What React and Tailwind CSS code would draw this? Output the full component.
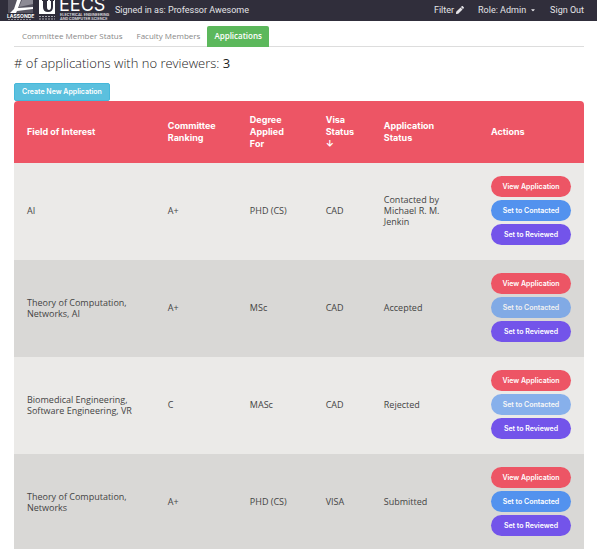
import { FaPen, FaCaretDown } from "react-icons/fa";

const rows = [
  { field: "AI", rank: "A+", degree: "PHD (CS)", visa: "CAD", status: "Contacted by Michael R. M. Jenkin", canContact: true },
  { field: "Theory of Computation, Networks, AI", rank: "A+", degree: "MSc", visa: "CAD", status: "Accepted", canContact: false },
  { field: "Biomedical Engineering, Software Engineering, VR", rank: "C", degree: "MASc", visa: "CAD", status: "Rejected", canContact: false },
  { field: "Theory of Computation, Networks", rank: "A+", degree: "PHD (CS)", visa: "VISA", status: "Submitted", canContact: true },
];

const pill = "block h-[21px] w-full whitespace-nowrap rounded-full font-['Inter',sans-serif] text-[7px] leading-[21px] font-semibold text-white";

function Logo() {
  return (
    <svg viewBox="0 0 104 21" className="h-[21px] w-[104px] shrink-0 overflow-visible font-['Inter',sans-serif]" role="img" aria-label="Lassonde EECS">
      <rect x="1" width="25" height="13" fill="#55535f" />
      <path d="M15 0h11v4L12 7z" fill="#8d8b95" />
      <path d="M10 0h4l-3 8 15-1v2L10 11l-1 2H3l4-4z" fill="#fff" />
      <text x="0" y="18" fontSize="5" fontWeight="700" fill="#fff">LASSONDE</text>
      <path d="M1 19.5h24" stroke="#8d8b95" strokeWidth="1" strokeDasharray="2 1" />
      <rect x="32" width="16" height="14" fill="#fff" />
      <path d="M35 0v1h1v6q0 5 5 5t5-5V1h1V0h-4v1h1v6q0 3-2 3t-2-3V1h1V0z" fill="#302e3b" />
      <path d="M32 16.5h16M32 19h16" stroke="#aaa8b0" strokeWidth="1" strokeDasharray="2 1" />
      <text x="52" y="11" fontSize="18" fill="#fff">EECS</text>
      <text x="53" y="16" fontSize="4" fontWeight="500" className="font-['Roboto',sans-serif]" fill="#e4e4e8">ELECTRICAL ENGINEERING</text>
      <text x="53" y="20" fontSize="4" fontWeight="500" className="font-['Roboto',sans-serif]" fill="#e4e4e8">AND COMPUTER SCIENCE</text>
    </svg>
  );
}

export default function App() {
  return (
    <div className="bg-white font-['Open_Sans',sans-serif] text-[#444]">
      <header className="flex h-[21px] items-center bg-[#302e3b] pr-[13px] pl-[7px] font-['Roboto',sans-serif] text-[9px] leading-4 text-[#e4e4e8]">
        <Logo />
        <span className="ml-1 -mt-0.5">Signed in as: Professor Awesome</span>
        <nav className="ml-auto -mt-0.5 flex gap-[14px]">
          <a href="#filter" className="flex items-center gap-0.5">Filter <FaPen size={8} /></a>
          <button className="flex items-center gap-1">Role: Admin <FaCaretDown size={6} /></button>
          <a href="#signout">Sign Out</a>
        </nav>
      </header>
      <main className="pt-[5px] pr-[13px] pl-[14px]">
        <nav className="flex h-[21px] border-b border-[#ddd] pl-px text-[8px] leading-5 text-[#888]">
          <a href="#members" className="px-[7px]">Committee Member Status</a>
          <a href="#faculty" className="px-[7px]">Faculty Members</a>
          <a href="#applications" className="h-[21px] rounded-t-xs bg-[#5cb85c] px-[7px] font-semibold text-white">Applications</a>
        </nav>
        <h1 className="mt-2 text-[13px] leading-4 font-light text-[#222]"># of applications with no reviewers: <b className="font-medium">3</b></h1>
        <button className="mt-3 block h-[18px] rounded-xs border border-[#46b8da] bg-[#5bc0de] px-[7px] font-['Inter',sans-serif] text-[7px] leading-4 font-semibold text-white">Create New Application</button>
        <table className="w-full table-fixed overflow-hidden rounded-t text-left">
          <thead>
            <tr className="h-[62px] bg-[#ed5565] font-['Inter',sans-serif] text-[9px] leading-3 text-white">
              <th className="w-[24.7%] pl-[13px] font-bold">Field of Interest</th>
              <th className="w-[14.4%] pl-[13px] font-bold">Committee Ranking</th>
              <th className="w-[13.3%] pr-6 pl-[13px] font-bold">Degree Applied For</th>
              <th className="w-[10.2%] pr-3 pl-[13px] font-bold">Visa Status ↓</th>
              <th className="w-[18.8%] pr-6 pl-[13px] font-bold">Application Status</th>
              <th className="pl-[13px] font-bold">Actions</th>
            </tr>
          </thead>
          <tbody>
            {rows.map((r, i) => (
              <tr key={i} className="h-[97px] text-[9px] leading-[11px] odd:bg-[#ebeae8] even:bg-[#d9d8d6]">
                <td className="px-[13px] pb-0.5">{r.field}</td>
                <td className="px-[13px] pb-0.5">{r.rank}</td>
                <td className="px-[13px] pb-0.5">{r.degree}</td>
                <td className="px-[13px] pb-0.5">{r.visa}</td>
                <td className="px-[13px] pb-0.5">{r.status}</td>
                <td className="px-[13px] pb-0.5">
                  <div className="flex flex-col gap-[3px]">
                    <button className={`${pill} bg-[#ed5565]`}>View Application</button>
                    <button disabled={!r.canContact} className={`${pill} bg-[#5392ee] disabled:opacity-65`}>Set to Contacted</button>
                    <button className={`${pill} bg-[#7354ea]`}>Set to Reviewed</button>
                  </div>
                </td>
              </tr>
            ))}
          </tbody>
        </table>
      </main>
    </div>
  );
}
